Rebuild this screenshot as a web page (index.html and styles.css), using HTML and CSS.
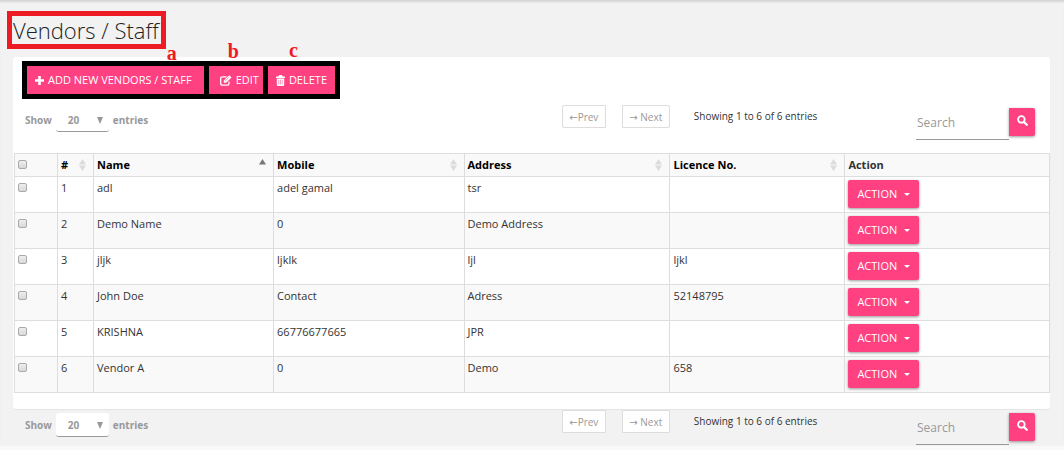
FILE: index.html
```html
<!DOCTYPE html>
<html lang="en">

<head>
  <meta charset="UTF-8">
  <title>Vendors / Staff</title>
  <link rel="stylesheet" href="styles.css">
</head>

<body>

  <!-- shared icons -->
  <svg class="sprite" aria-hidden="true">
    <symbol id="search" viewBox="0 0 12 12"><circle cx="4.8" cy="4.8" r="3.6" fill="none" stroke="#fff" stroke-width="2"/><path d="M7.5 7.5L10.7 10.7" stroke="#fff" stroke-width="2.4" stroke-linecap="round"/></symbol>
    <symbol id="sort" viewBox="0 0 7 12"><path d="M0 5.5L3.5 0L7 5.5ZM0 6.5L3.5 12L7 6.5Z" fill="#dcdcdc"/></symbol>
  </svg>

  <main class="page">
    <h1 class="title">Vendors / Staff</h1>

    <section class="card">
      <div class="toolbar">
        <button class="btn btn-add" type="button">
          <svg width="9" height="9" viewBox="0 0 9 9"><path d="M3.2 0H5.8V3.2H9V5.8H5.8V9H3.2V5.8H0V3.2H3.2Z" fill="#fff"/></svg>
          Add New Vendors / Staff
          <span class="mark mark-a">a</span>
        </button>
        <button class="btn btn-edit" type="button">
          <svg width="12" height="11" viewBox="0 0 12 11"><path d="M9 6.5V8.6Q9 10.2 7.4 10.2H2.3Q.7 10.2.7 8.6V3.4Q.7 1.8 2.3 1.8H6.5" fill="none" stroke="#fff" stroke-width="1.3"/><path d="M3.8 7.8V5.6L9.2.2L11.5 2.5L6.1 7.8Z" fill="#fff"/><path d="M5.2 6L8.8 2.4" stroke="#ff4081" stroke-width=".6"/></svg>
          Edit
          <span class="mark mark-b">b</span>
        </button>
        <button class="btn btn-delete" type="button">
          <svg width="9" height="11" viewBox="0 0 9 11"><path d="M0 1.6H2.4L3 0H6L6.6 1.6H9V3H0ZM.8 3.4H8.2V9.7Q8.2 11 7 11H2Q.8 11 .8 9.7Z" fill="#fff"/><path d="M2.8 4.8V9.3M4.5 4.8V9.3M6.2 4.8V9.3" stroke="#ff4081" stroke-width=".5"/></svg>
          Delete
          <span class="mark mark-c">c</span>
        </button>
      </div>

      <div class="controls">
        <label class="length">Show
          <span class="select"><select><option>20</option></select></span>
          entries</label>
        <div class="pager">
          <button class="prev" type="button" disabled>←Prev</button>
          <button class="next" type="button" disabled>→ Next</button>
          <span class="info">Showing 1 to 6 of 6 entries</span>
        </div>
        <form class="search">
          <input type="text" placeholder="Search" aria-label="Search">
          <button class="btn" type="button" aria-label="Go"><svg width="11" height="11"><use href="#search"/></svg></button>
        </form>
      </div>

      <table class="vendors">
        <colgroup>
          <col class="c-check"><col class="c-num"><col class="c-name"><col class="c-mobile"><col class="c-address"><col class="c-licence"><col>
        </colgroup>
        <thead>
          <tr>
            <th><input type="checkbox" aria-label="Select all"></th>
            <th>#<svg class="sort"><use href="#sort"/></svg></th>
            <th>Name<svg class="sort sort-asc" viewBox="0 0 7 12"><path d="M0 5.5L3.5 0L7 5.5Z"/></svg></th>
            <th>Mobile<svg class="sort"><use href="#sort"/></svg></th>
            <th>Address<svg class="sort"><use href="#sort"/></svg></th>
            <th>Licence No.<svg class="sort"><use href="#sort"/></svg></th>
            <th class="action">Action</th>
          </tr>
        </thead>
        <tbody>
          <tr><td><input type="checkbox" aria-label="Select 1"></td><td>1</td><td>adl</td><td>adel gamal</td><td>tsr</td><td></td><td><button class="btn btn-action" type="button">Action</button></td></tr>
          <tr><td><input type="checkbox" aria-label="Select 2"></td><td>2</td><td>Demo Name</td><td>0</td><td>Demo Address</td><td></td><td><button class="btn btn-action" type="button">Action</button></td></tr>
          <tr><td><input type="checkbox" aria-label="Select 3"></td><td>3</td><td>jljk</td><td>ljklk</td><td>ljl</td><td>ljkl</td><td><button class="btn btn-action" type="button">Action</button></td></tr>
          <tr><td><input type="checkbox" aria-label="Select 4"></td><td>4</td><td>John Doe</td><td>Contact</td><td>Adress</td><td>52148795</td><td><button class="btn btn-action" type="button">Action</button></td></tr>
          <tr><td><input type="checkbox" aria-label="Select 5"></td><td>5</td><td>KRISHNA</td><td>66776677665</td><td>JPR</td><td></td><td><button class="btn btn-action" type="button">Action</button></td></tr>
          <tr><td><input type="checkbox" aria-label="Select 6"></td><td>6</td><td>Vendor A</td><td>0</td><td>Demo</td><td>658</td><td><button class="btn btn-action" type="button">Action</button></td></tr>
        </tbody>
      </table>
    </section>

    <div class="controls controls-bottom">
      <label class="length">Show
        <span class="select"><select><option>20</option></select></span>
        entries</label>
      <div class="pager">
        <button class="prev" type="button" disabled>←Prev</button>
        <button class="next" type="button" disabled>→ Next</button>
        <span class="info">Showing 1 to 6 of 6 entries</span>
      </div>
      <form class="search">
        <input type="text" placeholder="Search" aria-label="Search">
        <button class="btn" type="button" aria-label="Go"><svg width="11" height="11"><use href="#search"/></svg></button>
      </form>
    </div>
  </main>

</body>
</html>
```
FILE: styles.css
```css
* { box-sizing: border-box; }
body { margin: 0; background: #f9f9f9; color: #333; font: 11px/16px "Open Sans", "DejaVu Sans", sans-serif; }
button, input, select { font: inherit; margin: 0; }
.sprite { position: absolute; width: 0; height: 0; }
.page { background: #f2f2f2; padding: 11px 14px 1px 13px; box-shadow: inset 0 3px 2px -1px #d4d4d4; }

.title { width: fit-content; margin: 0 0 8px -6px; padding: 0 2px 0 1px; border: 5px solid #ed1c24; font: 300 22px/28px "Open Sans", sans-serif; color: #222; }
.card { background: #fff; border-radius: 3px; padding: 4px 0 16px; box-shadow: 0 1px 1px #e4e4e4; }

.btn { border: 0; border-radius: 2px; height: 28px; padding: 0; background: #ff4081; color: #fff; font-size: 11px; text-transform: uppercase; white-space: nowrap; box-shadow: 0 1px 3px rgba(0,0,0,0.4); }
.toolbar { display: flex; gap: 5px; width: fit-content; margin-left: 9px; padding: 5px; background: #000; }
.toolbar .btn { position: relative; display: flex; align-items: center; gap: 4px; border-radius: 0; box-shadow: none; }
.btn-add { padding: 0 12px 0 8px; }
.btn-edit { padding: 0 4px 0 11px; }
.btn-delete { padding: 0 8px; }

/* letters over the toolbar buttons */
.mark { position: absolute; color: #ed1c24; font: bold 20px/20px "Liberation Serif", serif; text-transform: none; }
.mark-a { right: 27px; top: -23px; }
.mark-b { left: 19px; top: -25px; }
.mark-c { left: 21px; top: -26px; }

.controls { display: grid; grid-template-columns: 53.7% 1fr auto; align-items: start; height: 48px; margin-top: 6px; padding-right: 15px; }
.controls-bottom { height: 35px; margin-top: 1px; }
.length { display: flex; align-items: center; gap: 4px; padding: 3px 0 0 12px; color: #999; font-size: 10px; font-weight: bold; }
.select { position: relative; }
.select::after { content: ""; position: absolute; right: 6px; top: 9px; border: 3px solid transparent; border-top: 7px solid #999; border-bottom: 0; pointer-events: none; }
.select select { appearance: none; width: 53px; height: 24px; padding: 0 12px; border: 0; border-bottom: 1px solid #999; border-radius: 3px; background: #fff; color: #999; }
.pager { display: flex; font-size: 10px; }
.pager button { height: 23px; padding: 0; background: #fff; border: 1px solid #ddd; color: #999; }
.prev { width: 44px; border-radius: 2px 0 0 2px; margin-right: 16px; }
.next { width: 48px; border-radius: 0 2px 2px 0; margin-right: 24px; }
.info { line-height: 23px; }
.search { display: flex; padding-top: 3px; }
.search input { width: 93px; height: 32px; padding: 0 1px 2px; border: 0; border-bottom: 1px solid #999; background: none; font-size: 12px; }
.search input::placeholder { color: #999; opacity: 1; }
.search .btn { width: 26px; border-radius: 0 2px 2px 0; }

.vendors { width: calc(100% - 1px); margin-left: 1px; border-collapse: collapse; table-layout: fixed; }
.vendors th, .vendors td { border: 1px solid #ddd; padding: 3px; text-align: left; vertical-align: top; }
.vendors th { height: 23px; color: #000; }
.vendors .action { color: #333; }
.vendors td { height: 36px; }
.vendors thead tr, .vendors tbody tr:nth-child(even) { background: #f9f9f9; }
.c-check { width: 43px; }
.c-num { width: 36px; }
.c-name { width: 17.4%; }
.c-mobile { width: 18.4%; }
.c-address { width: 19.9%; }
.c-licence { width: 16.9%; }
.sort { float: right; width: 7px; height: 12px; margin: 2px 4px 0 0; }
.sort-asc { fill: #777; }
.vendors input { appearance: none; display: block; width: 9px; height: 9px; margin-top: 3px; border: 1px solid #aaa; border-radius: 2px; background: linear-gradient(#eee, #d8d8d8); }
.vendors input:checked { background: #ff4081; }
.btn-action { display: block; padding: 0 9px; }
.btn-action::after { content: ""; display: inline-block; margin-left: 7px; vertical-align: 2px; border: 3px solid transparent; border-top-color: #fff; border-bottom: 0; }
```
